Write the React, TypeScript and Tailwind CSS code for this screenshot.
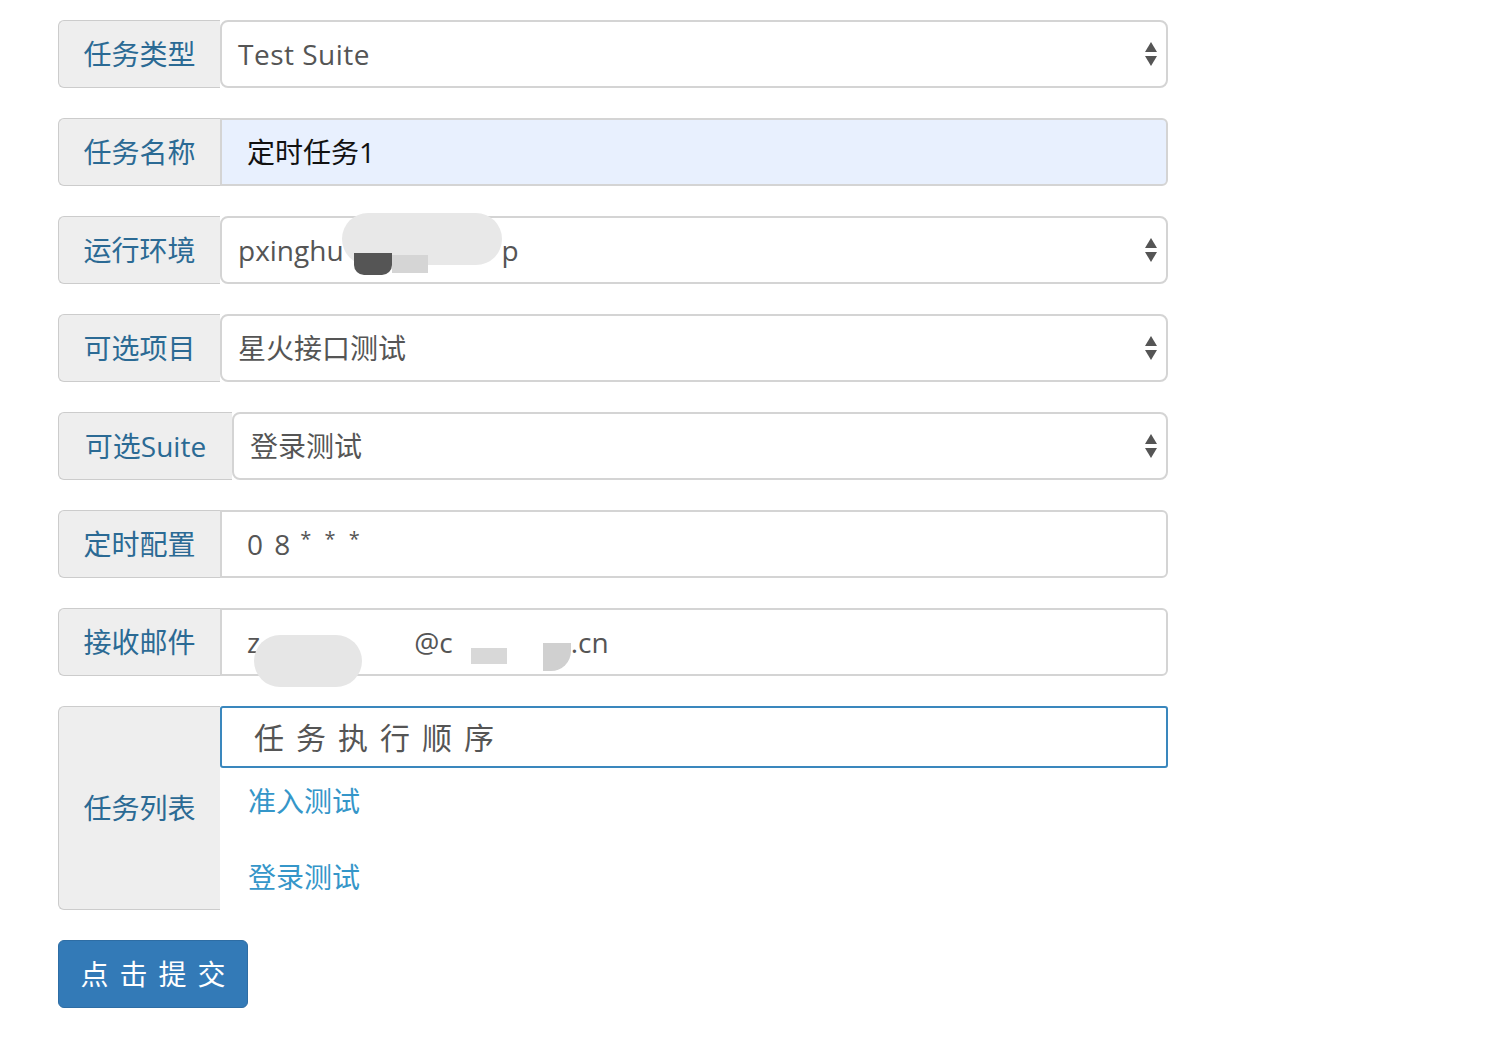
import React from "react";

const font = { fontFamily: '"Open Sans", "Noto Sans CJK SC", sans-serif' };

function Arrows() {
  return (
    <svg width="14" height="26" viewBox="0 0 14 26" className="absolute right-[8px] top-1/2 -translate-y-1/2">
      <polygon points="7,1 13,11 1,11" fill="#555" />
      <polygon points="1,15 13,15 7,25" fill="#555" />
    </svg>
  );
}

function Addon({ children, wide }: { children: React.ReactNode; wide?: boolean }) {
  return (
    <div
      className={`flex items-center justify-center shrink-0 bg-[#eeeeee] border border-[#cccccc] border-r-0 rounded-l-[6px] text-[#2b6a94] text-[28px] ${
        wide ? "w-[174px]" : "w-[162px]"
      }`}
    >
      {children}
    </div>
  );
}

function Row({
  label,
  wide,
  select,
  bg,
  pl,
  children,
}: {
  label: string;
  wide?: boolean;
  select?: boolean;
  bg?: string;
  pl?: string;
  children: React.ReactNode;
}) {
  return (
    <div className="flex h-[68px] w-[1110px]">
      <Addon wide={wide}>{label}</Addon>
      <div
        className={`relative flex-1 flex items-center border-2 border-[#d4d4d4] text-[28px] text-[#555] ${
          select ? "rounded-[8px]" : "rounded-r-[6px]"
        } ${bg ?? "bg-white"} ${pl ?? "pl-[16px]"}`}
      >
        {children}
        {select && <Arrows />}
      </div>
    </div>
  );
}

export default function App() {
  return (
    <div className="bg-white w-[1504px] h-[1042px] pl-[58px] pt-[20px]" style={font}>
      <div className="flex flex-col gap-[30px]">
        <Row label="任务类型" select>
          <span className="tracking-[0.5px]">Test Suite</span>
        </Row>
        <Row label="任务名称" bg="bg-[#e8f0fe]" pl="pl-[25px]">
          <span className="text-[#111]">定时任务1</span>
        </Row>
        <Row label="运行环境" select>
          <span>pxinghu</span>
          <span className="relative inline-flex items-end h-[52px] w-[160px] -ml-[2px] mt-[-22px] rounded-[26px] bg-[#e8e8e8]">
            <span className="block w-[38px] h-[22px] ml-[12px] mb-[-10px] bg-[#555] rounded-b-[10px]" />
            <span className="block w-[36px] h-[18px] mb-[-8px] bg-[#d5d5d5]" />
          </span>
          <span>p</span>
        </Row>
        <Row label="可选项目" select>
          星火接口测试
        </Row>
        <Row label="可选Suite" wide select>
          登录测试
        </Row>
        <Row label="定时配置" pl="pl-[25px]">
          <span className="tracking-[2px]">0 8</span>
          <span className="text-[20px] ml-[8px] mb-[10px] tracking-[4px]">* * *</span>
        </Row>
        <Row label="接收邮件" pl="pl-[25px]">
          <span>z</span>
          <span className="inline-block h-[52px] w-[108px] rounded-[26px] bg-[#e6e6e6] mt-[38px] -ml-[6px]" />
          <span className="ml-[52px]">@c</span>
          <span className="inline-block w-[36px] h-[16px] bg-[#d8d8d8] ml-[18px] mt-[28px]" />
          <span className="inline-block w-[28px] h-[28px] bg-[#d0d0d0] ml-[36px] mt-[30px] rounded-br-[20px]" />
          <span>.cn</span>
        </Row>

        <div className="flex w-[1110px] h-[204px]">
          <div className="flex items-center justify-center shrink-0 w-[162px] bg-[#eeeeee] border border-[#cccccc] border-r-0 rounded-l-[6px] text-[#2b6a94] text-[28px]">
            任务列表
          </div>
          <div className="flex-1 flex flex-col">
            <div className="h-[62px] flex items-center pl-[32px] border-2 border-[#3a87bd] rounded-[3px] text-[30px] text-[#555] tracking-[12px]">
              任务执行顺序
            </div>
            <div className="pl-[28px] pt-[14px] flex flex-col gap-[38px] text-[28px] leading-[38px] text-[#3596c9]">
              <span>准入测试</span>
              <span>登录测试</span>
            </div>
          </div>
        </div>

        <button className="w-[190px] h-[68px] bg-[#337ab7] border border-[#2e6da4] rounded-[6px] text-white text-[28px] tracking-[11px] pl-[11px]">
          点击提交
        </button>
      </div>
    </div>
  );
}
